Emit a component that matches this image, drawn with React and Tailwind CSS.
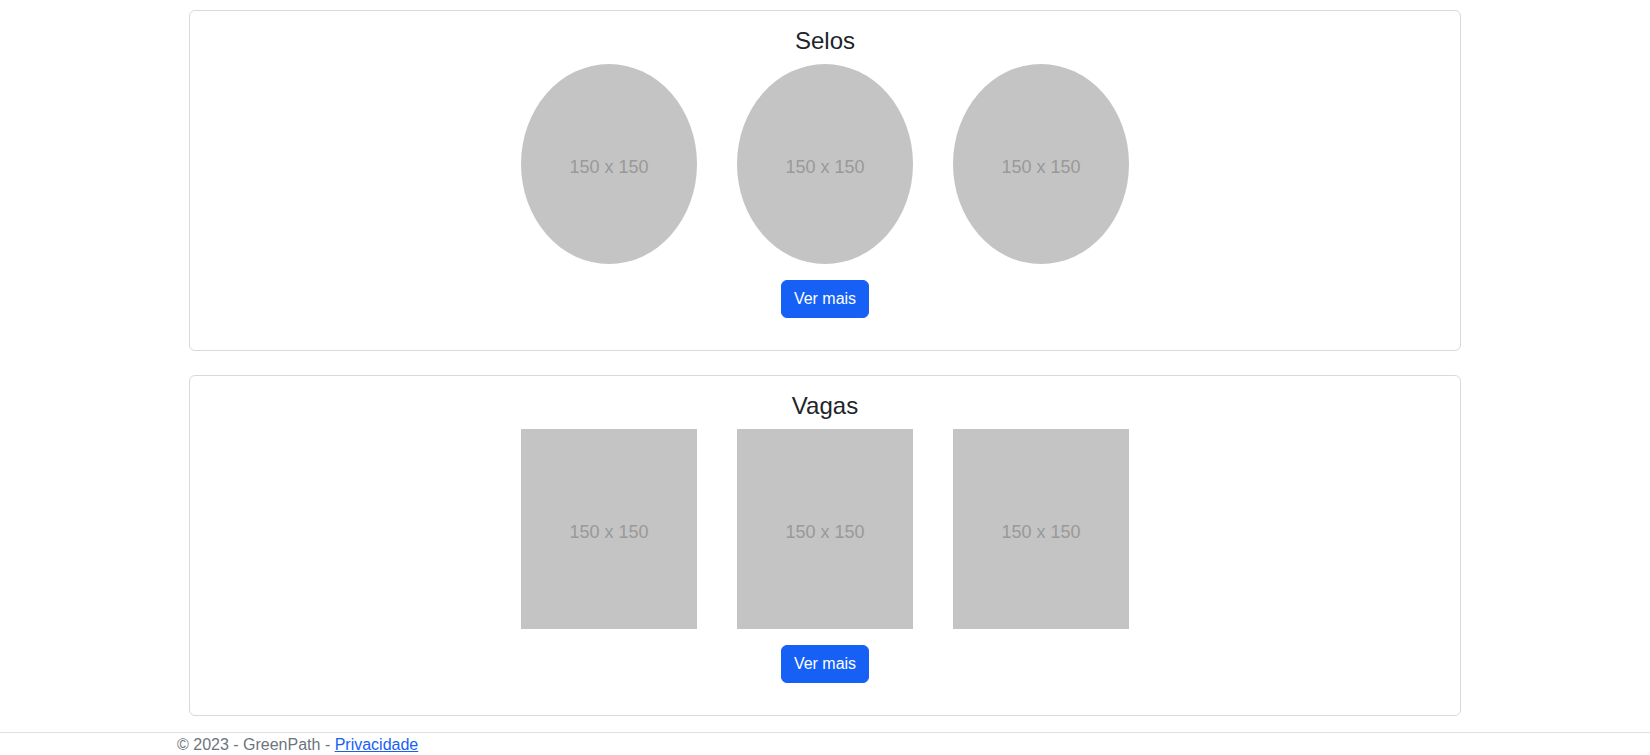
const SECTIONS = [
  { title: "Selos", shape: "rounded-[50%]" },
  { title: "Vagas", shape: "" },
];

function Placeholder({ shape }) {
  return (
    <div className={`flex h-[200px] w-[176px] items-center justify-center bg-[#c4c4c4] pt-2 text-[18px] text-[#999999] ${shape}`}>
      150 x 150
    </div>
  );
}

function Section({ title, shape, last }) {
  return (
    <div className={`rounded-[6px] border border-[#d9d9d9] bg-white p-4 ${last ? "" : "mb-6"}`}>
      <h4 className="mb-2 text-center text-[24px] leading-[1.2] font-medium text-[#212529]">{title}</h4>
      <div className="flex justify-center gap-10">
        <Placeholder shape={shape} />
        <Placeholder shape={shape} />
        <Placeholder shape={shape} />
      </div>
      <div className="mt-4 mb-4 flex justify-center">
        <button
          type="button"
          className="rounded-[6px] border border-[#1660f6] bg-[#1660f6] px-3 py-[6px] text-[16px] leading-6 text-white"
        >
          Ver mais
        </button>
      </div>
    </div>
  );
}

export default function App() {
  return (
    <div className="min-h-screen bg-white font-['Liberation_Sans',Arial,sans-serif]">
      <main className="mx-auto w-[1320px] px-6 pt-[10px]">
        {SECTIONS.map((s, i) => (
          <Section key={s.title} title={s.title} shape={s.shape} last={i === SECTIONS.length - 1} />
        ))}
      </main>

      <footer className="mt-4 border-t border-[#dee2e6] text-[16px] leading-6 text-[#6c757d]">
        <div className="mx-auto w-[1320px] px-3">
          © 2023 - GreenPath -{" "}
          <a href="#" className="text-[#1660f6] underline">
            Privacidade
          </a>
        </div>
      </footer>
    </div>
  );
}
